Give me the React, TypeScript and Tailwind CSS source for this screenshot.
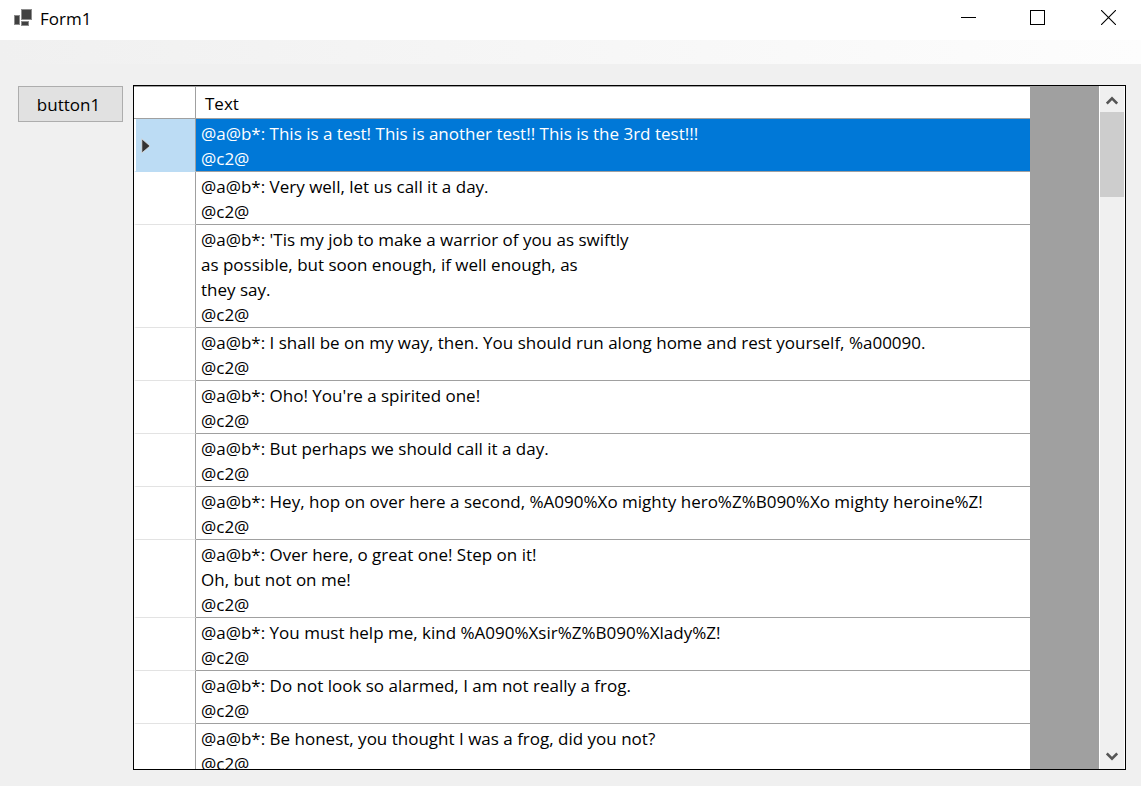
const rows: string[][] = [
  ["@a@b*: This is a test! This is another test!! This is the 3rd test!!!", "@c2@"],
  ["@a@b*: Very well, let us call it a day.", "@c2@"],
  [
    "@a@b*: 'Tis my job to make a warrior of you as swiftly",
    "as possible, but soon enough, if well enough, as",
    "they say.",
    "@c2@",
  ],
  [
    "@a@b*: I shall be on my way, then. You should run along home and rest yourself, %a00090.",
    "@c2@",
  ],
  ["@a@b*: Oho! You're a spirited one!", "@c2@"],
  ["@a@b*: But perhaps we should call it a day.", "@c2@"],
  [
    "@a@b*: Hey, hop on over here a second, %A090%Xo mighty hero%Z%B090%Xo mighty heroine%Z!",
    "@c2@",
  ],
  ["@a@b*: Over here, o great one! Step on it!", "Oh, but not on me!", "@c2@"],
  ["@a@b*: You must help me, kind %A090%Xsir%Z%B090%Xlady%Z!", "@c2@"],
  ["@a@b*: Do not look so alarmed, I am not really a frog.", "@c2@"],
  ["@a@b*: Be honest, you thought I was a frog, did you not?", "@c2@"],
];

function AppIcon() {
  return (
    <svg width="20" height="18" viewBox="0 0 20 18" aria-hidden="true">
      <g fill="#404040" stroke="#8c8c8c" strokeWidth="1">
        <rect x="8.5" y="0.5" width="10" height="10" />
        <rect x="1.5" y="6.5" width="5" height="9" />
        <rect x="8.5" y="12.5" width="7" height="4" />
      </g>
    </svg>
  );
}

function TitleBar() {
  return (
    <header className="flex h-10 shrink-0 items-start justify-between bg-white">
      <div className="flex h-9 items-center gap-[7px] pl-[13px]">
        <AppIcon />
        <h1 className="pt-px text-[17px] leading-6">Form1</h1>
      </div>
      <div className="flex h-[35px]">
        <button aria-label="Minimize" className="flex w-[69px] items-center justify-center">
          <svg width="15" height="15" viewBox="0 0 15 15" aria-hidden="true">
            <path d="M0 7.5H15" stroke="#000" fill="none" />
          </svg>
        </button>
        <button aria-label="Maximize" className="flex w-[69px] items-center justify-center">
          <svg width="15" height="15" viewBox="0 0 15 15" aria-hidden="true">
            <rect x="0.5" y="0.5" width="14" height="14" stroke="#000" fill="none" />
          </svg>
        </button>
        <button aria-label="Close" className="flex w-[69px] items-center justify-center pl-1">
          <svg width="15" height="15" viewBox="0 0 15 15" aria-hidden="true">
            <path d="M0 0L15 15M15 0L0 15" stroke="#000" strokeWidth="1.1" fill="none" />
          </svg>
        </button>
      </div>
    </header>
  );
}

function DataGrid() {
  return (
    <table className="w-full table-fixed border-separate border-spacing-0">
      <colgroup>
        <col className="w-[62px]" />
        <col />
      </colgroup>
      <thead>
        <tr>
          <th
            aria-label="Row"
            className="h-[33px] border-r border-b border-t border-[#a0a0a0] bg-white p-0"
          />
          <th
            scope="col"
            className="h-[33px] border-t border-b border-[#a0a0a0] bg-white pt-0.5 pr-2 pb-0 pl-[9px] text-left font-normal leading-6"
          >
            Text
          </th>
        </tr>
      </thead>
      <tbody>
        {rows.map((lines, index) => {
          const selected = index === 0;
          return (
            <tr key={index} aria-selected={selected}>
              <th
                scope="row"
                aria-label={`Row ${index + 1}`}
                className={
                  selected
                    ? "border-r border-b border-l-2 border-r-[#a0a0a0] border-b-[#bcdcf4] border-l-white bg-[#bcdcf4] p-0"
                    : "border-r border-b border-l-2 border-r-[#a0a0a0] border-b-[#e3e3e3] border-l-white bg-white p-0"
                }
              >
                {selected && (
                  <svg className="ml-[5px] block" width="10" height="15" viewBox="0 0 10 15" aria-hidden="true">
                    <path d="M0.8 0.8L9 8L0.8 15Z" fill="#333" stroke="#e2e2e2" strokeWidth="0.8" />
                  </svg>
                )}
              </th>
              <td
                className={
                  selected
                    ? "border-b border-[#a0a0a0] bg-[#0078d7] pt-0.5 pr-1 pb-0 pl-[5px] text-white"
                    : "border-b border-[#a0a0a0] bg-white pt-0.5 pr-1 pb-0 pl-[5px]"
                }
              >
                {lines.map((line, i) => (
                  <div key={i} className="whitespace-nowrap leading-[25px]">
                    {line}
                  </div>
                ))}
              </td>
            </tr>
          );
        })}
      </tbody>
    </table>
  );
}

function ScrollBar() {
  return (
    <div className="flex w-[26px] shrink-0 flex-col border-x border-white bg-[#f0f0f0]">
      <button aria-label="Scroll up" className="flex h-[26px] shrink-0 items-center justify-center pt-0.5">
        <svg width="12" height="9" viewBox="0 0 12 9" aria-hidden="true">
          <path d="M0.8 7.5L6 2.3L11.2 7.5" stroke="#555" strokeWidth="2.6" fill="none" />
        </svg>
      </button>
      <div className="h-[85px] bg-[#cdcdcd]" />
      <div className="flex-1" />
      <button aria-label="Scroll down" className="flex h-[26px] shrink-0 items-center justify-center">
        <svg width="12" height="9" viewBox="0 0 12 9" aria-hidden="true">
          <path d="M0.8 1.5L6 6.7L11.2 1.5" stroke="#555" strokeWidth="2.6" fill="none" />
        </svg>
      </button>
    </div>
  );
}

export default function App() {
  return (
    <div className="flex h-screen flex-col bg-[#f0f0f0] font-['Open_Sans','Noto_Sans',sans-serif] text-[17px] text-black">
      <TitleBar />
      <div className="h-6 shrink-0 bg-linear-to-r from-[#f0f0f0] to-[#fdfdfd]" />
      <main className="flex min-h-0 flex-1 items-start gap-[10px] pt-[21px] pr-[15px] pb-4 pl-[18px]">
        <button className="mt-px h-9 w-[105px] shrink-0 border border-[#adadad] bg-[#e1e1e1] pt-px pr-1 leading-6">
          button1
        </button>
        <div className="flex h-full min-w-0 flex-1 border border-black bg-[#a0a0a0]">
          <div className="mr-[69px] min-w-0 flex-1 overflow-hidden">
            <DataGrid />
          </div>
          <ScrollBar />
        </div>
      </main>
    </div>
  );
}
